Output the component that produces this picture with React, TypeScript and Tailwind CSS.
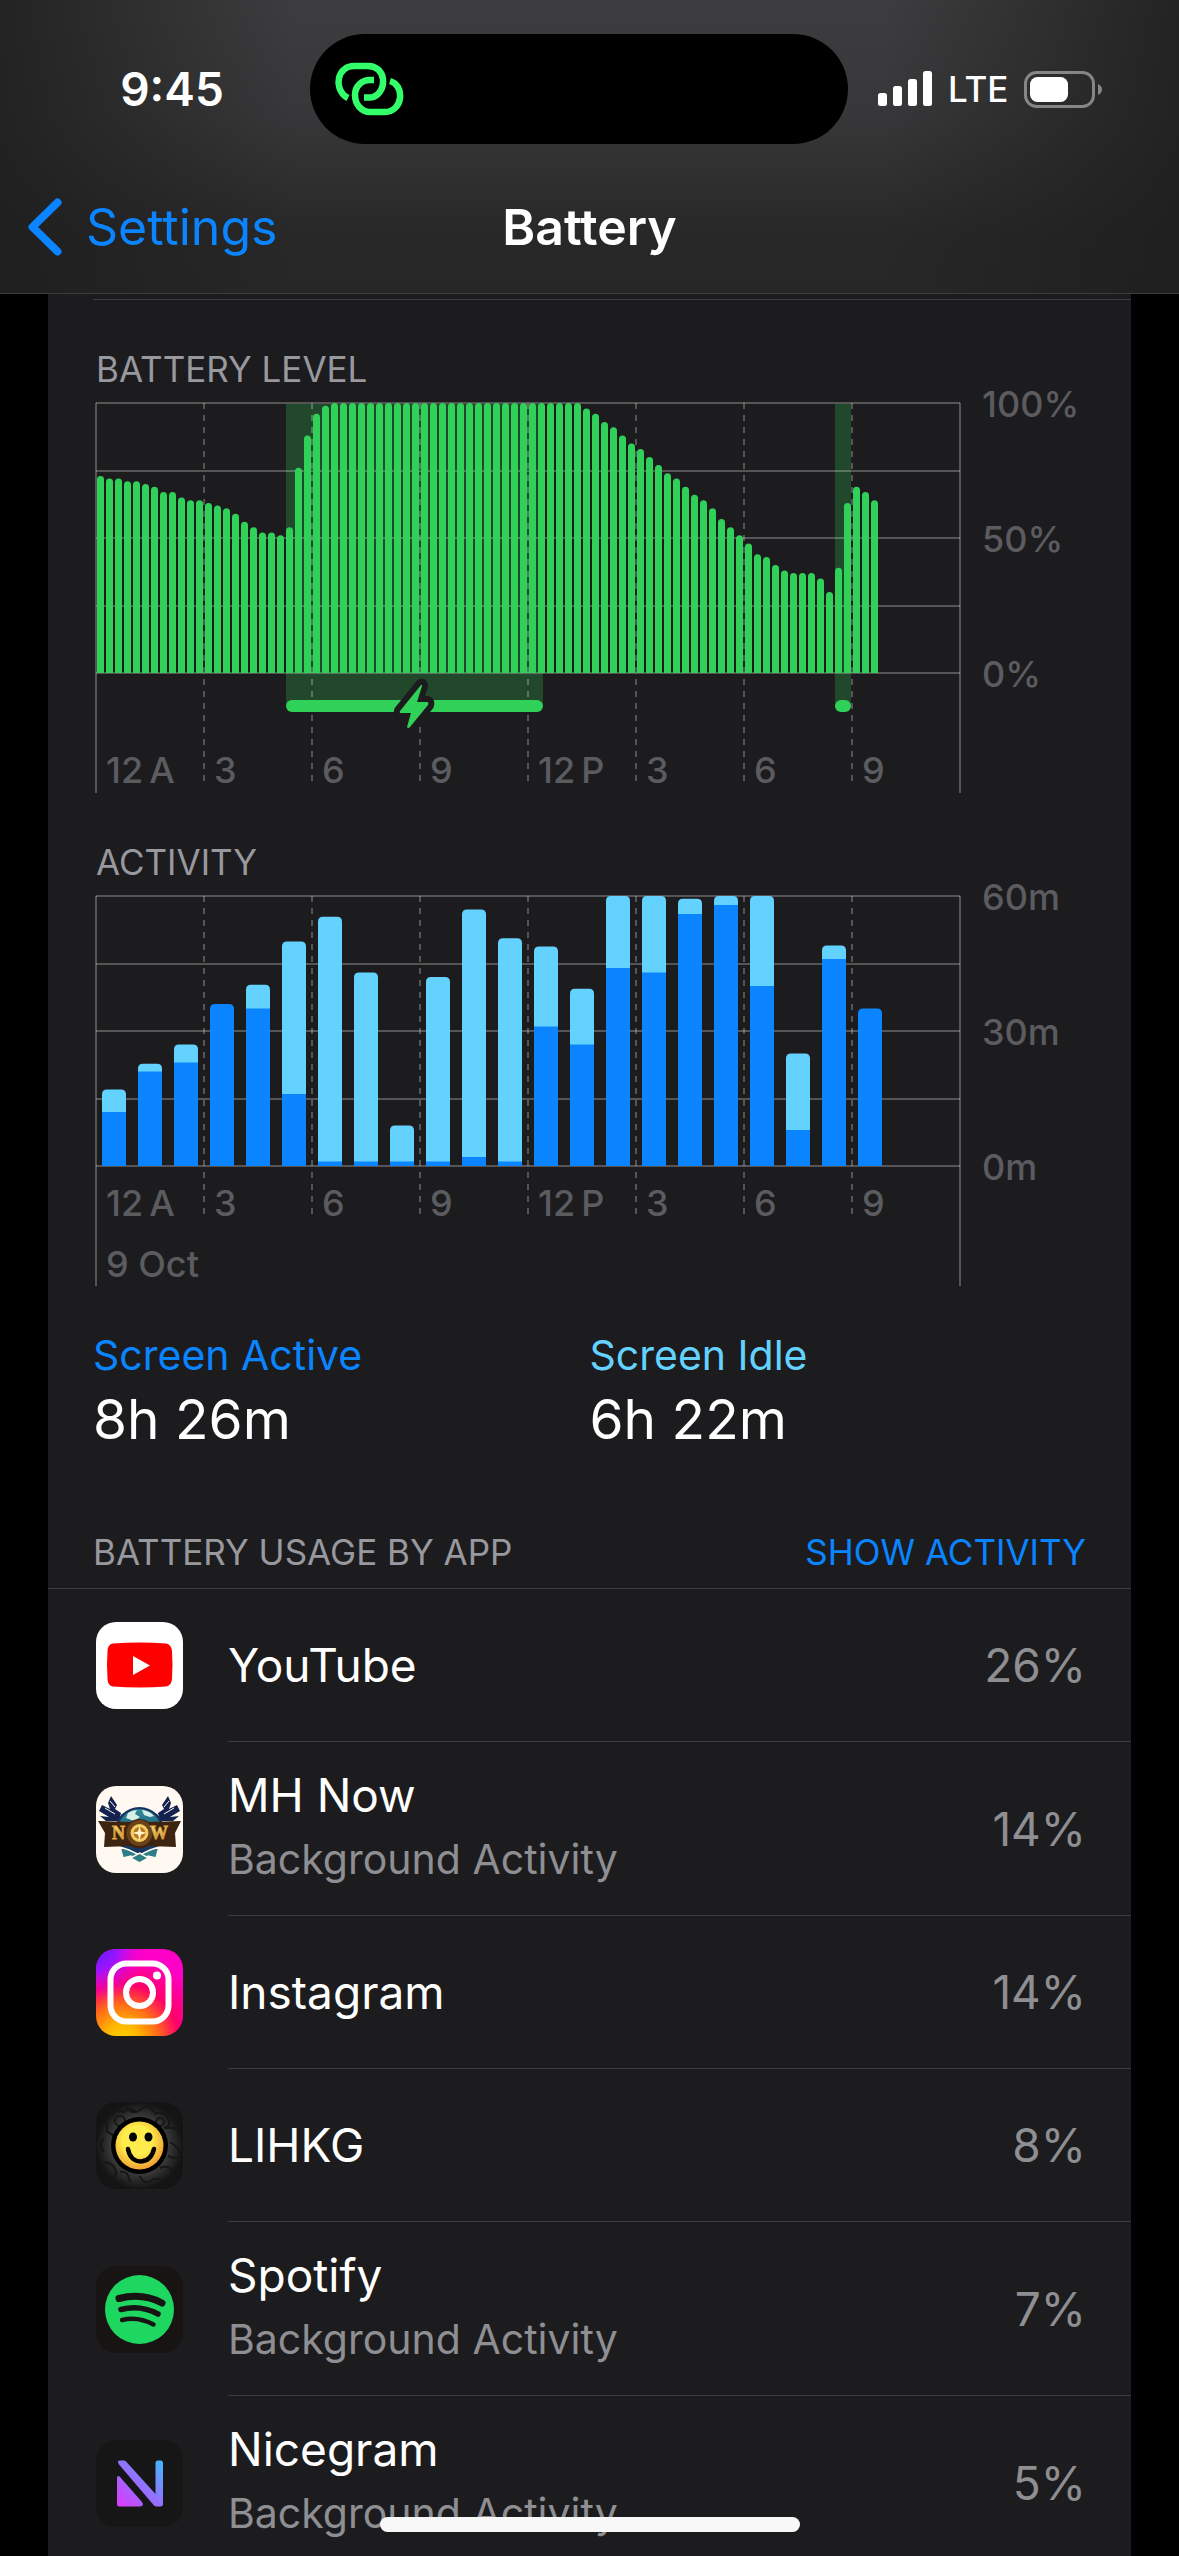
import React from "react";

const BATTERY_LEVELS = [
    73, 72, 72, 71, 71, 70, 69, 67, 67, 65, 64, 64, 63, 62, 61, 59, 56, 54, 52, 52, 51, 54, 76, 88, 96, 99,
    ...Array<number>(28).fill(100),
    98, 96, 93, 91, 88, 85, 83, 80, 77, 74, 72, 69, 66, 64, 61, 57, 54, 51, 48, 44, 43, 40, 38, 37, 37, 37,
    35, 30, 39, 63, 69, 67, 64,
];

// [total minutes, minutes with the screen on] per hour
const ACTIVITY = [
    [17, 12], [22.7, 21], [27, 23], [36, 36], [40.3, 35], [49.9, 16], [55.4, 1], [43, 1],
    [9, 1], [42, 1], [57, 2], [50.6, 1], [48.8, 31], [39.4, 27], [60, 44], [60, 43],
    [59.4, 56], [60, 58], [60, 40], [25, 8], [49, 46], [35, 35],
];

// Thin space between the number and A / P
const HOURS = ["12\u2009A", "3", "6", "9", "12\u2009P", "3", "6", "9"];

interface ChartFrameProps {
    label: string;
    height: number;
    dashEnd: number;
    hourBaseline: number;
    scale: string[];
    underlay?: React.ReactNode;
    children: React.ReactNode;
}

// Plot area: x 48..912, y 16..286, three hours every 108 units
function ChartFrame({ label, height, dashEnd, hourBaseline, scale, underlay, children }: ChartFrameProps) {
    return (
        <svg viewBox={`0 0 1083 ${height}`} className="block w-full overflow-visible" role="img" aria-label={label}>
            {underlay}
            <g stroke="#fff" strokeOpacity="0.25" strokeWidth="2">
                {[16, 84, 151, 219, 286].map((y) => (
                    <line key={y} x1="48" x2="912" y1={y} y2={y} />
                ))}
                <line x1="48" x2="48" y1="16" y2={height} />
                <line x1="912" x2="912" y1="16" y2={height} />
                {[156, 264, 372, 480, 588, 696, 804].map((x) => (
                    <line key={x} x1={x} x2={x} y1="16" y2={dashEnd} strokeDasharray="6 6" />
                ))}
            </g>
            {children}
            <g fill="#5b5b60" fontSize="36" fontWeight="500">
                {HOURS.map((hour, i) => (
                    <text key={i} x={58 + i * 108} y={hourBaseline}>{hour}</text>
                ))}
                {scale.map((text, i) => (
                    <text key={text} x="934" y={30 + i * 135}>{text}</text>
                ))}
            </g>
        </svg>
    );
}

function BatteryLevelChart() {
    return (
        <ChartFrame
            label="Battery level"
            height={406}
            dashEnd={400}
            hourBaseline={396}
            scale={["100%", "50%", "0%"]}
            underlay={
                <g fill="#21482b">
                    <rect x="238" y="17" width="257" height="302" />
                    <rect x="787" y="17" width="16" height="302" />
                </g>
            }
        >
            <g fill="#30d158">
                {BATTERY_LEVELS.map((level, i) => {
                    const top = 286 - level * 2.7;
                    const x = 49 + i * 9;
                    return <path key={i} d={`M${x} 286V${top + 3.5}a3.5 3.5 0 0 1 7 0V286z`} />;
                })}
                <rect x="238" y="313" width="257" height="12" rx="6" />
                <rect x="787" y="313" width="16" height="12" rx="6" />
                <path
                    d="M373 298L352 324Q351 326 353 326H363L359 340Q360 342 362 340L380 318Q381 315 379 315H369L374 299Q374 297 373 298Z"
                    stroke="#1c1c1e"
                    strokeWidth="12"
                    strokeLinejoin="round"
                    paintOrder="stroke"
                />
            </g>
        </ChartFrame>
    );
}

function ActivityChart() {
    return (
        <ChartFrame label="Activity" height={406} dashEnd={340} hourBaseline={336} scale={["60m", "30m", "0m"]}>
            {ACTIVITY.map(([total, active], i) => {
                const x = 54 + i * 36;
                const top = 286 - total * 4.5;
                const split = 286 - active * 4.5;
                return (
                    <g key={i}>
                        <path
                            d={`M${x} 286V${top + 5}q0-5 5-5h14q5 0 5 5V286z`}
                            fill={total === active ? "#0a84ff" : "#64d2ff"}
                        />
                        {total !== active && <rect x={x} y={split} width="24" height={286 - split} fill="#0a84ff" />}
                    </g>
                );
            })}
            <text x="58" y="397" fill="#5b5b60" fontSize="36" fontWeight="500">9 Oct</text>
        </ChartFrame>
    );
}

function YouTubeIcon() {
    return (
        <svg viewBox="0 0 87 87" className="size-full bg-white">
            <path d="M17 21.500Q43.500 19.500 70 21.500Q75.500 22.500 76 29Q77 43 76 57Q75.500 63.500 70 64.500Q43.500 66.500 17 64.500Q11.500 63.500 11.500 57Q10.500 43 11.500 29Q11.500 22.500 17 21.500Z" fill="#f00" />
            <path d="M37 34v19l17-9.500z" fill="#fff" />
        </svg>
    );
}

function MHNowIcon() {
    return (
        <svg viewBox="0 0 87 87" className="size-full bg-[#fff9f2]">
            <defs>
                <linearGradient id="mh-globe" x1="0" y1="0" x2="0" y2="1">
                    <stop offset="0" stopColor="#2f8c9a" />
                    <stop offset="1" stopColor="#12305e" />
                </linearGradient>
                <linearGradient id="mh-gold" x1="0" y1="0" x2="0" y2="1">
                    <stop offset="0" stopColor="#fff0a0" />
                    <stop offset="1" stopColor="#c07a1c" />
                </linearGradient>
            </defs>
            {/* Wings */}
            <g fill="#152250">
                <path d="M15 10l6 9-2 4 6 4-2 8H10l-6-5 9 1-10-6 3-6 8 4-2-6z" />
                <path d="M72 10l-6 9 2 4-6 4 2 8h13l6-5-9 1 10-6-3-6-8 4 2-6z" />
            </g>
            <g stroke="#fff9f2" strokeWidth="1">
                <path d="M9 22l10 6M14 15l5 6M78 22l-10 6M73 15l-5 6" />
            </g>
            <circle cx="43.500" cy="46" r="25" fill="#16305f" />
            <circle cx="43.500" cy="45" r="22" fill="url(#mh-globe)" />
            <path d="M32 27q4-3 9-3l-2 4 5 3-6 4-8-3zM46 24q8 1 12 6l-4 1-6-2z" fill="#d8efe8" />
            {/* Lower ornament */}
            <path d="M24 61l9 3 10.500 5 10.500-5 9-3-3 11-8-2-8.500 6-8.500-6-8 2z" fill="#2c7f84" stroke="#fff9f2" strokeWidth="1.500" />
            <path d="M43.500 67l9 5-9 5-9-5z" fill="#2c7f84" stroke="#fff9f2" strokeWidth="1.500" />
            <path d="M2 35l32 1q9-6 19 0l32-1-6 12 1 14-27-1q-10 5-19 0l-26 1 1-14z" fill="#3c2410" />
            <circle cx="43.500" cy="47" r="13" fill="#6b421a" />
            <g fontFamily="Liberation Serif, serif" fontSize="18" fontWeight="700" fill="url(#mh-gold)" stroke="#e0a73c" strokeWidth="0.8">
                <text x="16" y="53">N</text>
                <text x="54" y="53">W</text>
            </g>
            <circle cx="43.500" cy="47" r="7.500" fill="#b5761f" stroke="#f3cd62" strokeWidth="3" />
            <path d="M43.500 40l1.500 5.500 6 1.500-6 1.500-1.500 6-1.500-6-6-1.500 6-1.500z" fill="#fff6c8" />
        </svg>
    );
}

function InstagramIcon() {
    return (
        <svg viewBox="0 0 87 87" className="size-full">
            <defs>
                <radialGradient id="ig-warm" cx="0.3" cy="1.05" r="1">
                    <stop offset="0" stopColor="#ffd600" />
                    <stop offset="0.2" stopColor="#ffb400" />
                    <stop offset="0.42" stopColor="#ff6a1a" />
                    <stop offset="0.65" stopColor="#ff0069" />
                    <stop offset="1" stopColor="#ff00c8" />
                </radialGradient>
                <radialGradient id="ig-cool" cx="0" cy="0" r="0.6">
                    <stop offset="0" stopColor="#5b1bff" />
                    <stop offset="0.4" stopColor="#9a14ff" />
                    <stop offset="1" stopColor="#f0c" stopOpacity="0" />
                </radialGradient>
            </defs>
            <rect width="87" height="87" fill="url(#ig-warm)" />
            <rect width="87" height="87" fill="url(#ig-cool)" />
            <g fill="none" stroke="#fff" strokeWidth="6">
                <rect x="14.500" y="14.500" width="58" height="58" rx="16" />
                <circle cx="43.500" cy="43.500" r="13.500" />
            </g>
            <circle cx="61" cy="26.500" r="4" fill="#fff" />
        </svg>
    );
}

function LihkgIcon() {
    return (
        <svg viewBox="0 0 87 87" className="size-full">
            <defs>
                <radialGradient id="lihkg-bg">
                    <stop offset="0.5" stopColor="#4a4a4a" />
                    <stop offset="1" stopColor="#141414" />
                </radialGradient>
                <radialGradient id="lihkg-face" cx="0.45" cy="0.4" r="0.62">
                    <stop offset="0.5" stopColor="#fdec4b" />
                    <stop offset="1" stopColor="#ee9c31" />
                </radialGradient>
            </defs>
            <rect width="87" height="87" fill="url(#lihkg-bg)" />
            <g fill="none" stroke="#161616" strokeWidth="2">
                <path d="M3 22q5-14 8 0v8q8 2 8 10M8 36q-6 8 0 14M16 14q4-8 12-4 6-6 12 0M30 4q6 10 14 4 8-8 14 2M58 12q8-4 14 4 4 8-4 10M70 26q12-2 15 8M74 40q10 6 10 14M72 54q8 4 12 0M64 66q10-4 14 6M44 74q4 10 12 4 10-4 14 6M24 70q8-2 10 10M6 60q12 0 14 10 0 8-8 12M2 74q8 2 14 12" />
                <circle cx="24" cy="19" r="5" />
                <circle cx="64" cy="20" r="4" />
            </g>
            <circle cx="43.500" cy="43.500" r="28.500" fill="#000" />
            <circle cx="43.500" cy="43.500" r="24" fill="url(#lihkg-face)" />
            <ellipse cx="37" cy="35" rx="4" ry="4.500" fill="#000" />
            <ellipse cx="52.500" cy="35" rx="4" ry="4.500" fill="#000" />
            <path d="M32 47q2 12 13 12.500q10-.5 13-12.500" fill="none" stroke="#000" strokeWidth="4.500" strokeLinecap="round" />
        </svg>
    );
}

function SpotifyIcon() {
    return (
        <svg viewBox="0 0 87 87" className="size-full bg-[#191414]">
            <circle cx="43.500" cy="43.500" r="34.500" fill="#1ed760" />
            <g fill="none" stroke="#191414" strokeLinecap="round">
                <path d="M23 32.500q23-6 43 4.500" strokeWidth="7" />
                <path d="M25 43.500q19-5 37 4.500" strokeWidth="5.500" />
                <path d="M26 54q16-4 31.500 4.500" strokeWidth="4.500" />
            </g>
        </svg>
    );
}

function NicegramIcon() {
    return (
        <svg viewBox="0 0 87 87" className="size-full bg-[#161616]">
            <defs>
                <linearGradient id="nicegram" gradientUnits="userSpaceOnUse" x1="22" y1="66" x2="66" y2="22">
                    <stop offset="0" stopColor="#d93bff" />
                    <stop offset="0.5" stopColor="#9470ff" />
                    <stop offset="1" stopColor="#45b6ff" />
                </linearGradient>
            </defs>
            <g fill="url(#nicegram)">
                <path d="M22 22.500Q21.500 20.500 24 20.500H28Q29.500 20.500 30.500 22L59.500 54V23Q59.500 20.500 62 20.500H64.500Q67 20.500 67 23V64Q67 66.500 64.500 66.500H60.500Q59 66.500 58 65.500L23 24.500Z" />
                <path d="M21 37.500Q22 35 24 37L46 62Q48.500 66 44 66.500H23Q21 66.500 21 64.500Z" />
            </g>
        </svg>
    );
}

interface AppUsage {
    name: string;
    percent: string;
    detail?: string;
    icon: React.ReactNode;
}

const APPS: AppUsage[] = [
    { name: "YouTube", percent: "26%", icon: <YouTubeIcon /> },
    { name: "MH Now", percent: "14%", detail: "Background Activity", icon: <MHNowIcon /> },
    { name: "Instagram", percent: "14%", icon: <InstagramIcon /> },
    { name: "LIHKG", percent: "8%", icon: <LihkgIcon /> },
    { name: "Spotify", percent: "7%", detail: "Background Activity", icon: <SpotifyIcon /> },
    { name: "Nicegram", percent: "5%", detail: "Background Activity", icon: <NicegramIcon /> },
];

function AppRow({ name, percent, detail, icon }: AppUsage) {
    return (
        <li className="group flex items-stretch pl-12">
            <div className="mr-[45px] flex items-center">
                <div className="size-[87px] overflow-hidden rounded-[20px]">{icon}</div>
            </div>
            <div
                className={`flex flex-1 items-center justify-between border-b border-[#3d3d41] pr-[45px] group-last:border-b-0 ${
                    detail ? "min-h-[174px]" : "min-h-[153px]"
                }`}
            >
                <div className={detail ? "pb-1" : ""}>
                    <p className="text-[46px] leading-[60px] text-white">{name}</p>
                    {detail && <p className="mt-1 text-[41px] leading-[60px] text-[#8e8e93]">{detail}</p>}
                </div>
                <span className="text-[46px] leading-[60px] text-[#8e8e93]">{percent}</span>
            </div>
        </li>
    );
}

function StatusBar() {
    return (
        <div className="grid grid-cols-[310fr_538px_331fr] items-center pt-[34px]">
            <div className="pl-[34px] text-center text-[46px] leading-[60px] font-semibold text-white">9:45</div>
            <div className="flex h-[110px] items-center rounded-full bg-black pl-6">
                <svg viewBox="0 0 70 54" className="h-[54px] w-[70px]" fill="none" stroke="#32ff6a" strokeWidth="6.500">
                    <path d="M14 36C4 31 4 20 5 16C7 8 13 4 20 4H34C42 4 48 9 49 17C50 27 44 35 36 35.500H30" />
                    <path d="M40 18H36C28 18 21 24 21 33C21 43 28 50 36 50H51C59 50 65 44 66 36C67 28 63 21 56 19" />
                </svg>
            </div>
            <div className="flex items-center pl-[30px]">
                <svg viewBox="0 0 54 36" className="h-9 w-[54px]" fill="#fff">
                    <rect x="0" y="22" width="9" height="13" rx="2.500" />
                    <rect x="15" y="15" width="9" height="20" rx="2.500" />
                    <rect x="30" y="8" width="9" height="27" rx="2.500" />
                    <rect x="45" y="0" width="9" height="35" rx="2.500" />
                </svg>
                <span className="ml-4 text-[35px] leading-[48px] font-medium text-white">LTE</span>
                <svg viewBox="0 0 79 37" className="ml-4 h-[37px] w-[79px]">
                    <rect x="1.500" y="1.500" width="68" height="34" rx="11" fill="none" stroke="#868688" strokeWidth="3" />
                    <rect x="6" y="6" width="38" height="25" rx="7.500" fill="#fff" />
                    <path d="M74 13q4 2 4 5.500t-4 5.500z" fill="#868688" />
                </svg>
            </div>
        </div>
    );
}

export default function App() {
    return (
        <div className="flex h-screen flex-col overflow-hidden bg-black font-['Inter','Liberation_Sans',sans-serif]">
            <header className="shrink-0 border-b border-[#3d3d41] bg-[linear-gradient(90deg,#1d1d1dcc_0%,transparent_25%,transparent_75%,#1d1d1dcc_100%),linear-gradient(180deg,#3d3d3f_0%,#373739_40%,#282828_80%,#272727_100%)]">
                <StatusBar />
                <div className="grid h-[149px] grid-cols-[1fr_auto_1fr] items-center pt-4">
                    <a href="#settings" className="flex items-center gap-6 pl-7 text-[50px] leading-[60px] text-[#0a84ff]">
                        <svg viewBox="0 0 34 58" className="h-[58px] w-[34px]" fill="none" stroke="#0a84ff" strokeWidth="8" strokeLinecap="round" strokeLinejoin="round">
                            <path d="M29.500 4.500L4.500 29L29.500 53.500" />
                        </svg>
                        Settings
                    </a>
                    <h1 className="text-[50px] leading-[60px] font-semibold text-white">Battery</h1>
                </div>
            </header>

            <main className="mx-12 min-h-0 flex-1 overflow-hidden bg-[#1c1c1e]">
                <div className="mt-[5px] ml-[45px] border-t border-[#3d3d41]" />

                <h2 className="mt-[51px] pl-12 text-[35px] leading-9 text-[#98989f]">BATTERY LEVEL</h2>
                <BatteryLevelChart />

                <h2 className="mt-[51px] pl-12 text-[35px] leading-9 text-[#98989f]">ACTIVITY</h2>
                <ActivityChart />

                <dl className="mt-[39px] grid grid-cols-2 px-[45px]">
                    <div>
                        <dt className="text-[41px] leading-[60px] text-[#0a84ff]">Screen Active</dt>
                        <dd className="text-[55px] leading-[68px] text-white">8h 26m</dd>
                    </div>
                    <div>
                        <dt className="text-[41px] leading-[60px] text-[#64d2ff]">Screen Idle</dt>
                        <dd className="text-[55px] leading-[68px] text-white">6h 22m</dd>
                    </div>
                </dl>

                <section>
                    <div className="mt-[81px] flex items-center justify-between border-b border-[#3d3d41] px-[45px] pb-[18px] text-[35px] leading-9">
                        <h2 className="text-[#98989f]">BATTERY USAGE BY APP</h2>
                        <button type="button" className="text-[#0a84ff]">SHOW ACTIVITY</button>
                    </div>
                    <ul>
                        {APPS.map((app) => (
                            <AppRow key={app.name} {...app} />
                        ))}
                    </ul>
                </section>
            </main>

            {/* Home indicator */}
            <div className="fixed bottom-6 left-1/2 h-[15px] w-[420px] -translate-x-1/2 rounded-full bg-[#f8f8f8]" />
        </div>
    );
}
